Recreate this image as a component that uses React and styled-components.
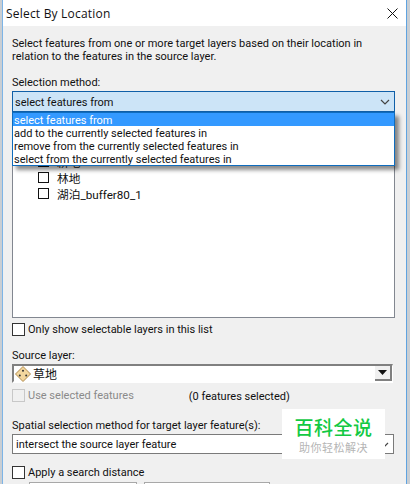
import React from "react";
import styled, { createGlobalStyle } from "styled-components";

const Global = createGlobalStyle`
  html, body { margin: 0; padding: 0; background: #f0f0f0; }
  * { box-sizing: border-box; }
`;

const fontStack = `Roboto, "Noto Sans CJK SC", sans-serif`;

const Page = styled.div`
  position: relative;
  width: 410px;
  height: 484px;
  overflow: hidden;
  background: #c9ced3;
  padding: 0 3px 0 2px;
  font-family: ${fontStack};
  font-size: 11px;
  color: #111;
`;

const Dialog = styled.div`
  height: 100%;
  border-left: 1px solid #7db4e6;
  border-right: 1px solid #5fa3e0;
  background: #f0f0f0;
`;

const TitleBar = styled.div`
  height: 26px;
  background: #fff;
  display: flex;
  align-items: center;
  justify-content: space-between;
  padding: 0 8px 0 3px;
  font-family: "Open Sans", sans-serif;
  font-size: 12px;
  letter-spacing: 0.2px;
`;

const Body = styled.div`
  display: flex;
  flex-direction: column;
  padding: 11px 11px 0 9px;
`;

const Intro = styled.p`
  margin: 0;
  line-height: 13px;
  height: 26px;
`;

const Label = styled.div`
  height: 14px;
  line-height: 16px;
  margin-top: ${(p) => p.$top || 0}px;
`;

const ComboWrap = styled.div`
  position: relative;
  margin-top: 2px;
`;

const Combo = styled.div`
  height: 21px;
  border: 1px solid #0f5fa8;
  background: #cce4f7;
  display: flex;
  align-items: center;
  justify-content: space-between;
  padding: 1px 4px 0 2px;
`;

const Menu = styled.ul`
  position: absolute;
  z-index: 2;
  top: 21px;
  left: 0;
  right: 0;
  margin: 0;
  padding: 0;
  list-style: none;
  background: #fff;
  border: 1px solid #0f6cbd;
  box-shadow: 4px 4px 4px rgba(0, 0, 0, 0.45);
`;

const MenuItem = styled.li`
  height: 13px;
  line-height: 15px;
  padding-left: 1px;
  background: ${(p) => (p.$active ? "#3399ff" : "#fff")};
  color: ${(p) => (p.$active ? "#fff" : "#111")};
`;

const LayerList = styled.div`
  height: 204px;
  margin-top: 2px;
  border: 1px solid #828790;
  background: #fff;
  padding: 38px 0 0 25px;
  display: flex;
  flex-direction: column;
`;

const LayerRow = styled.div`
  height: 16px;
  display: flex;
  align-items: center;
  gap: 8px;
  font-size: 11.7px;
`;

const Box = styled.span`
  width: 11px;
  height: 11px;
  flex: none;
  border: 1px solid #111;
  background: #fff;
`;

const CheckRow = styled.div`
  display: flex;
  align-items: center;
  gap: 3px;
  height: 14px;
  margin-top: ${(p) => p.$top || 0}px;
  color: ${(p) => (p.$off ? "#8a8a8a" : "#111")};
`;

const BigBox = styled.span`
  width: 13px;
  height: 13px;
  flex: none;
  border: 1px solid ${(p) => (p.$off ? "#c8c8c8" : "#333")};
  background: ${(p) => (p.$off ? "#f0f0f0" : "#fff")};
`;

const SourceSelect = styled.div`
  height: 19px;
  margin-top: 2px;
  margin-right: 2px;
  display: flex;
  align-items: center;
  background: #fff;
  border-style: solid;
  border-width: 2px 1px 2px 2px;
  border-color: #808080 #fff #fff #808080;
  gap: 2px;
  font-size: 12px;
  padding-left: 1px;
`;

const ArrowButton = styled.span`
  margin-left: auto;
  width: 17px;
  height: 15px;
  background: #f0f0f0;
  border-right: 2px solid #808080;
  border-bottom: 2px solid #808080;
  display: flex;
  align-items: center;
  justify-content: center;
`;

const Selected = styled.div`
  display: flex;
  align-items: center;
  margin-top: 5px;
`;

const Count = styled.span`
  margin-left: 55px;
  padding-top: 2px;
`;

const MethodSelect = styled.div`
  height: 20px;
  margin-top: 2px;
  margin-right: 1px;
  border: 1px solid #7a7a7a;
  background: #fff;
  display: flex;
  align-items: center;
  justify-content: space-between;
  padding: 1px 4px 0 3px;
`;

const DistanceRow = styled.div`
  display: flex;
  gap: 7px;
  margin: 3px 0 0 17px;
`;

const DistanceField = styled.div`
  width: ${(p) => p.$width}px;
  height: 20px;
  border: 1px solid #a8a8a8;
  background: #fff;
`;

const Watermark = styled.div`
  position: absolute;
  z-index: 3;
  left: 282px;
  top: 409px;
  width: 103px;
  height: 50px;
  background: #fff;
  display: flex;
  flex-direction: column;
  align-items: center;
  font-family: "Noto Sans CJK SC", sans-serif;
`;

const WatermarkTitle = styled.div`
  margin-top: 6px;
  font-size: 19px;
  line-height: 24px;
  font-weight: 500;
  letter-spacing: 0.5px;
  color: #12c943;
`;

const WatermarkSub = styled.div`
  margin-top: 1px;
  font-size: 11px;
  line-height: 14px;
  letter-spacing: 0.5px;
  color: #b5b5b5;
`;

const Chevron = () => (
  <svg width="10" height="6" viewBox="0 0 10 6">
    <path d="M1 1l4 4 4-4" fill="none" stroke="#444" strokeWidth="1.2" />
  </svg>
);

const CloseIcon = () => (
  <svg width="11" height="11" viewBox="0 0 11 11">
    <path d="M.5.5l10 10M10.5.5l-10 10" fill="none" stroke="#111" strokeWidth="1" />
  </svg>
);

const PolygonIcon = () => (
  <svg width="16" height="16" viewBox="0 0 16 16">
    <path d="M8 .5L15.5 8 8 15.5.5 8z" fill="#f3d79e" stroke="#b08a4c" />
    <circle cx="8" cy="4.8" r="1" fill="#333" />
    <circle cx="4.8" cy="9.4" r="1" fill="#333" />
    <circle cx="11.2" cy="9.4" r="1" fill="#333" />
  </svg>
);

const methods = [
  "select features from",
  "add to the currently selected features in",
  "remove from the currently selected features in",
  "select from the currently selected features in",
];

const layers = ["耕地", "林地", "湖泊_buffer80_1"];

export default function App() {
  return (
    <Page>
      <Global />
      <Dialog>
        <TitleBar>
          <span>Select By Location</span>
          <CloseIcon />
        </TitleBar>
        <Body>
          <Intro>
            Select features from one or more target layers based on their location in
            <br />
            relation to the features in the source layer.
          </Intro>
          <Label $top={12}>Selection method:</Label>
          <ComboWrap>
            <Combo>
              <span>select features from</span>
              <Chevron />
            </Combo>
            <Menu>
              {methods.map((m, i) => (
                <MenuItem key={m} $active={i === 0}>
                  {m}
                </MenuItem>
              ))}
            </Menu>
          </ComboWrap>
          <LayerList>
            {layers.map((l) => (
              <LayerRow key={l}>
                <Box />
                <span>{l}</span>
              </LayerRow>
            ))}
          </LayerList>
          <CheckRow $top={4}>
            <BigBox />
            <span>Only show selectable layers in this list</span>
          </CheckRow>
          <Label $top={12}>Source layer:</Label>
          <SourceSelect>
            <PolygonIcon />
            <span>草地</span>
            <ArrowButton>
              <svg width="9" height="5" viewBox="0 0 9 5">
                <path d="M0 0h9L4.5 5z" fill="#111" />
              </svg>
            </ArrowButton>
          </SourceSelect>
          <Selected>
            <CheckRow $off>
              <BigBox $off />
              <span>Use selected features</span>
            </CheckRow>
            <Count>(0 features selected)</Count>
          </Selected>
          <Label $top={15}>Spatial selection method for target layer feature(s):</Label>
          <MethodSelect>
            <span>intersect the source layer feature</span>
            <Chevron />
          </MethodSelect>
          <CheckRow $top={11}>
            <BigBox />
            <span>Apply a search distance</span>
          </CheckRow>
          <DistanceRow>
            <DistanceField $width={108} />
            <DistanceField $width={126} />
          </DistanceRow>
        </Body>
      </Dialog>
      <Watermark>
        <WatermarkTitle>百科全说</WatermarkTitle>
        <WatermarkSub>助你轻松解决</WatermarkSub>
      </Watermark>
    </Page>
  );
}
